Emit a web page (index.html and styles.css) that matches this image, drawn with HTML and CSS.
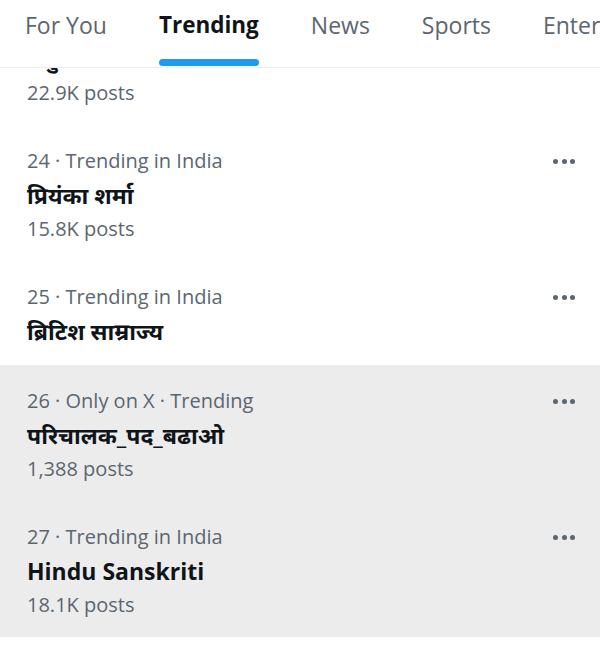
FILE: index.html
```html
<!DOCTYPE html>
<html lang="en">
<head>
  <meta charset="UTF-8" />
  <meta name="viewport" content="width=device-width, initial-scale=1.0" />
  <title>Explore - Trending</title>
  <link rel="stylesheet" href="styles.css">
</head>
<body>
  <nav class="tabs">
    <a class="tab">For You</a>
    <a class="tab active">Trending</a>
    <a class="tab">News</a>
    <a class="tab">Sports</a>
    <a class="tab">Entertainment</a>
  </nav>

  <div class="list">
    <div class="trend first">
      <div class="info">
        <div class="meta">23 · Trending in India</div>
        <div class="title">मधुबनी</div>
        <div class="meta">22.9K posts</div>
      </div>
    </div>

    <div class="trend">
      <div class="info">
        <div class="meta">24 · Trending in India</div>
        <div class="title">प्रियंका शर्मा</div>
        <div class="meta">15.8K posts</div>
      </div>
      <span class="more"><i></i><i></i><i></i></span>
    </div>

    <div class="trend">
      <div class="info">
        <div class="meta">25 · Trending in India</div>
        <div class="title">ब्रिटिश साम्राज्य</div>
      </div>
      <span class="more"><i></i><i></i><i></i></span>
    </div>

    <div class="trend hover">
      <div class="info">
        <div class="meta">26 · Only on X · Trending</div>
        <div class="title">परिचालक_पद_बढाओ</div>
        <div class="meta">1,388 posts</div>
      </div>
      <span class="more"><i></i><i></i><i></i></span>
    </div>

    <div class="trend hover">
      <div class="info">
        <div class="meta">27 · Trending in India</div>
        <div class="title">Hindu Sanskriti</div>
        <div class="meta">18.1K posts</div>
      </div>
      <span class="more"><i></i><i></i><i></i></span>
    </div>
  </div>
</body>
</html>
```

FILE: styles.css
```css
:root {
  --text: #0f1419;
  --muted: #5b6670;
  --blue: #1d9bf0;
  --line: #eceff1;
  --hover: #ececec;
}

body {
  margin: 0;
  font-family: "Open Sans", "Noto Sans", sans-serif;
  color: var(--text);
  background: #fff;
  overflow: hidden;
}

.tabs {
  position: relative;
  z-index: 1;
  display: flex;
  gap: 52px;
  height: 67px;
  padding-left: 25px;
  background: #fff;
  border-bottom: 1px solid var(--line);
  white-space: nowrap;
  overflow: hidden;
}

.tab {
  position: relative;
  font-size: 23px;
  line-height: 50px;
  color: var(--muted);
}

.tab.active {
  color: var(--text);
  font-weight: bold;
  font-size: 22.5px;
}

.tab.active::after {
  content: "";
  position: absolute;
  left: 0;
  right: 0;
  bottom: 1px;
  height: 7px;
  border-radius: 4px;
  background: var(--blue);
}

.trend {
  display: flex;
  justify-content: space-between;
  align-items: flex-start;
  padding: 17px 25px 17px 27px;
}

.trend.first {
  margin-top: -77px;
}

.trend.hover {
  padding-top: 19px;
  padding-bottom: 15px;
  background: var(--hover);
}

.meta {
  font-size: 20px;
  line-height: 34px;
  color: var(--muted);
}

.title {
  font-size: 23px;
  line-height: 34px;
  font-weight: bold;
}

.more {
  display: flex;
  gap: 3.5px;
  height: 34px;
  align-items: center;
}

.more i {
  width: 5px;
  height: 5px;
  border-radius: 50%;
  background: var(--muted);
}
```
